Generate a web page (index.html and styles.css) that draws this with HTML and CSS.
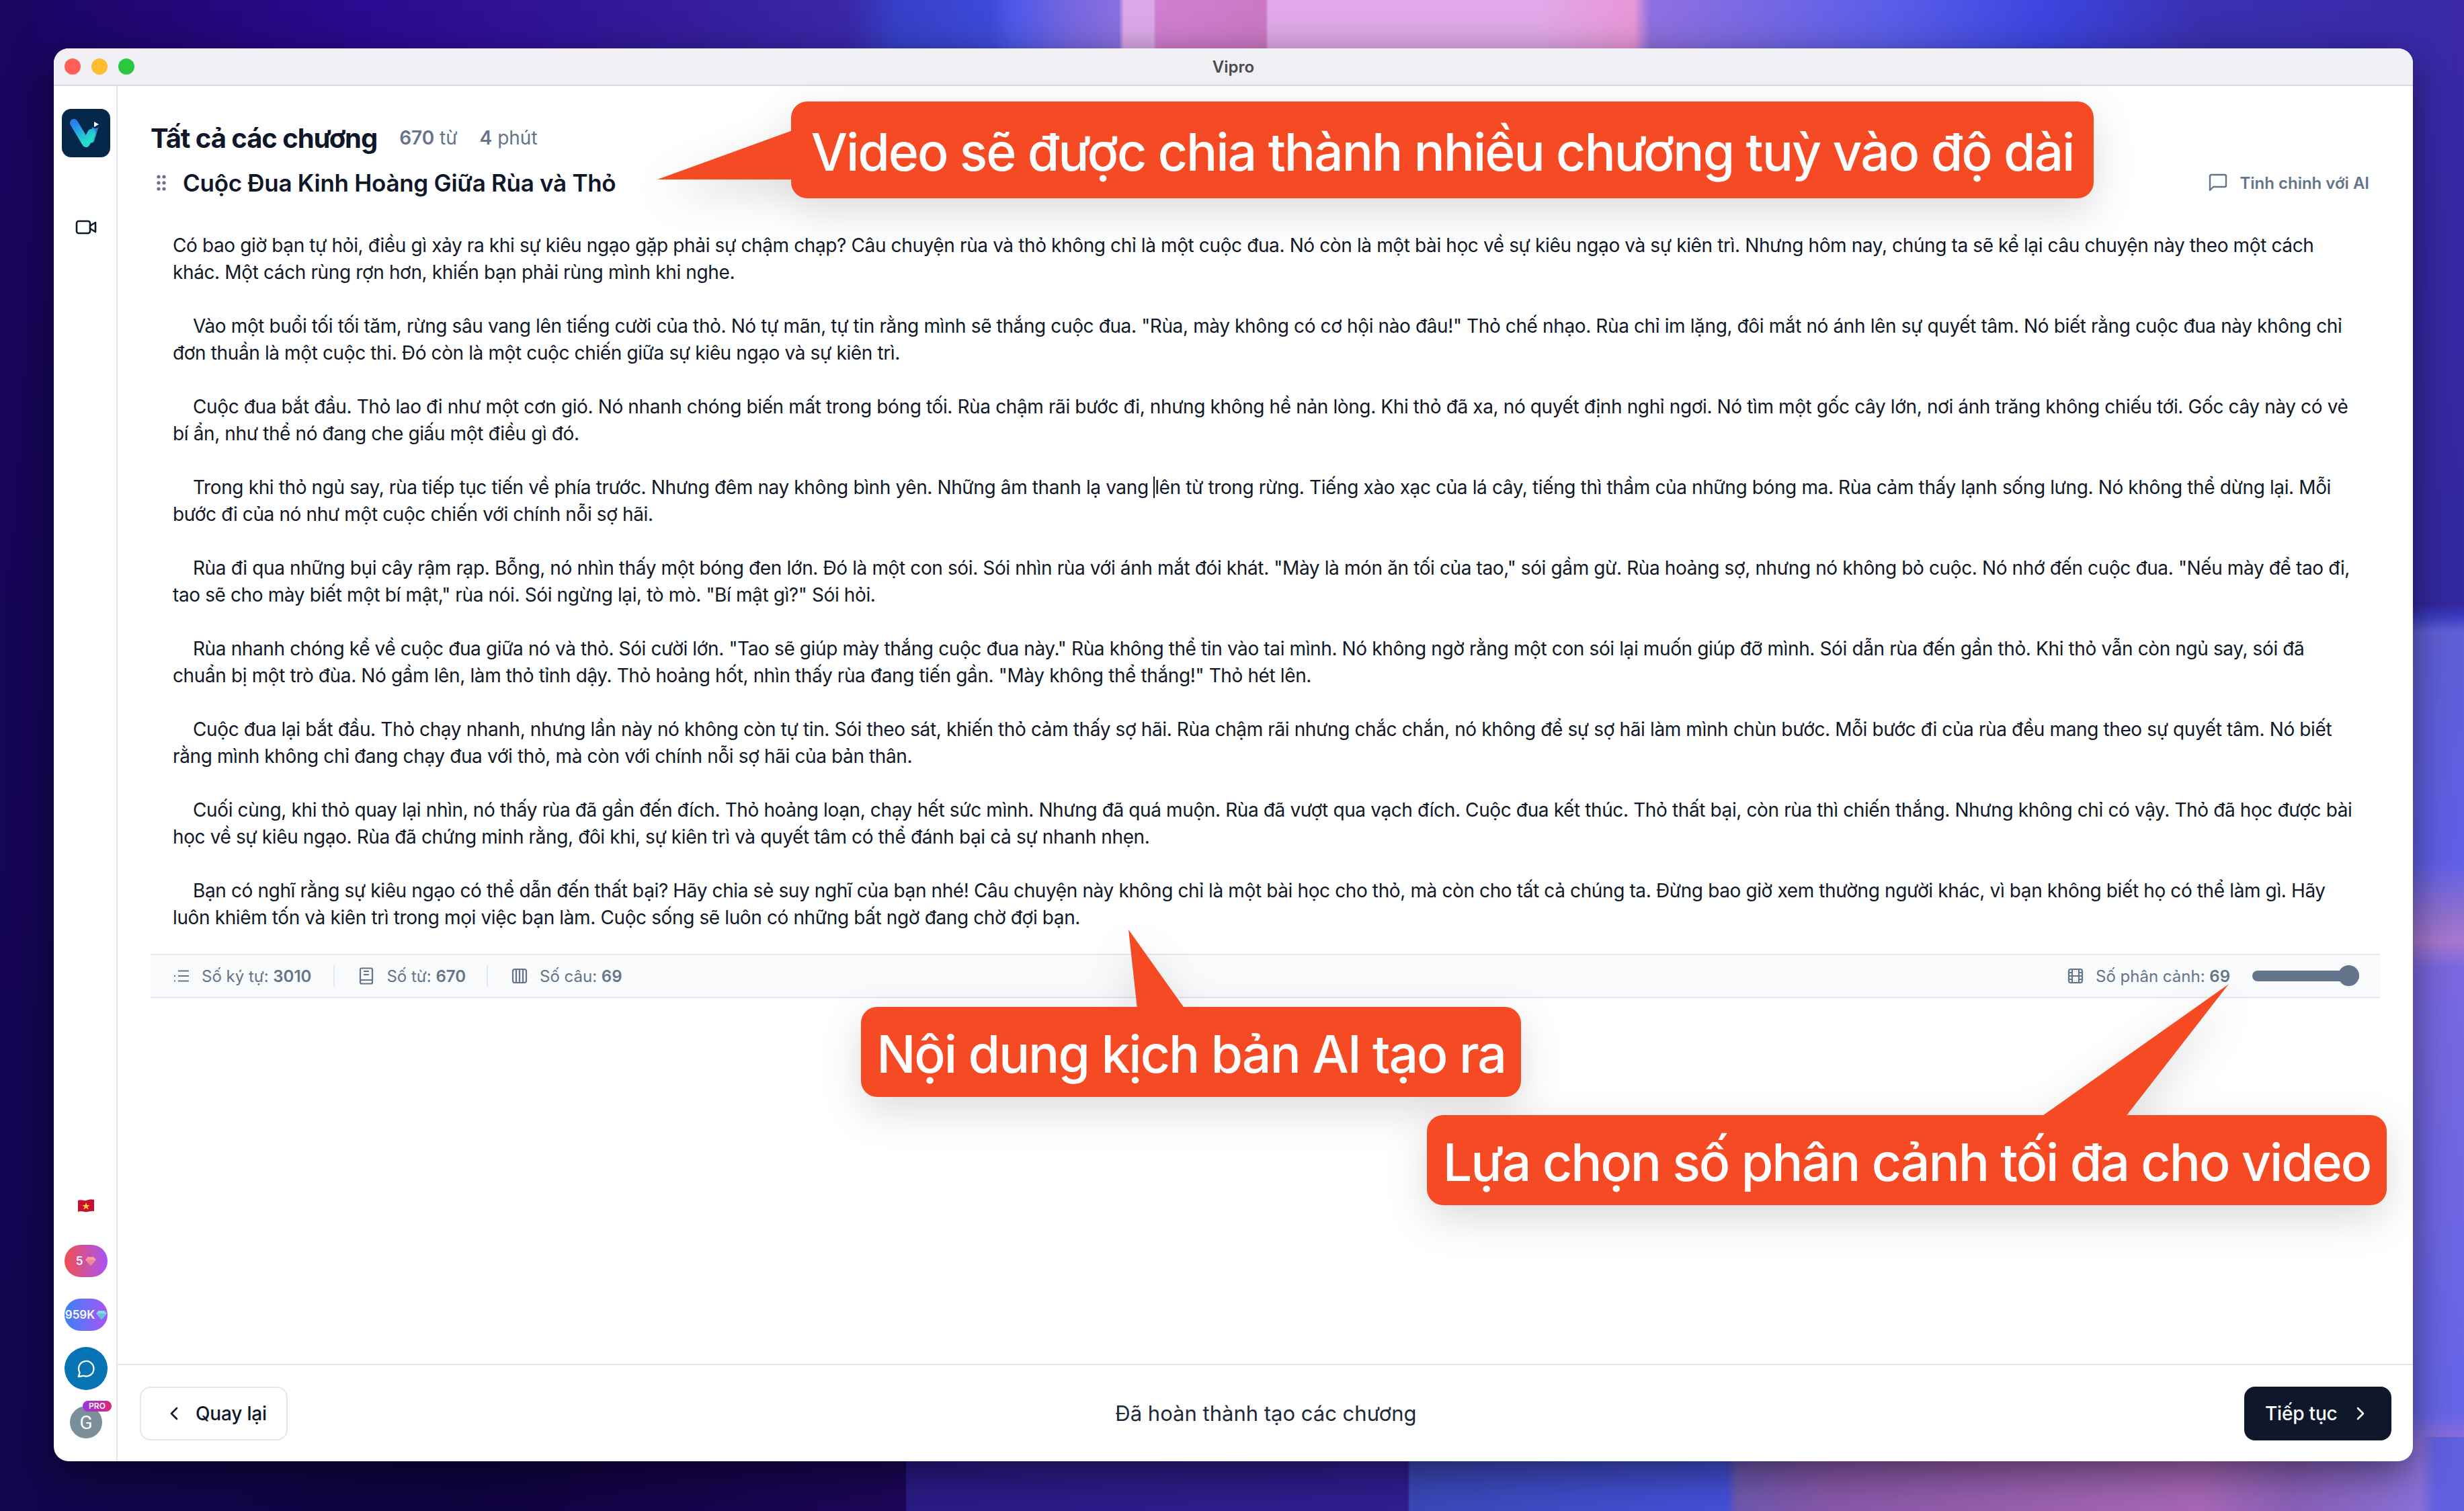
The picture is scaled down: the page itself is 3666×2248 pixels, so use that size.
FILE: index.html
```html
<!DOCTYPE html>
<html lang="vi">
<head>
    <meta charset="UTF-8">
    <title>Vipro</title>
    <link rel="stylesheet" href="styles.css">
</head>
<body>
    <div class="window">
        <header class="titlebar">
            <div class="lights"><span class="light red"></span><span class="light yellow"></span><span class="light green"></span></div>
            <div class="app-name">Vipro</div>
        </header>
        <div class="app">
            <!-- Sidebar -->
            <aside class="sidebar">
                <svg class="logo" viewBox="0 0 72 72">
                    <defs>
                        <linearGradient id="vLeft" x1="0" y1="0" x2="0.5" y2="1"><stop offset="0" stop-color="#2a7ff2"/><stop offset="1" stop-color="#25dccb"/></linearGradient>
                        <linearGradient id="vRight" x1="0" y1="1" x2="1" y2="0"><stop offset="0" stop-color="#25d5cf"/><stop offset="1" stop-color="#2a6fe0"/></linearGradient>
                    </defs>
                    <rect width="72" height="72" rx="14" fill="#04274a"/>
                    <path d="M44 46L51 24" stroke="url(#vRight)" stroke-width="9" stroke-linecap="round" fill="none"/>
                    <path d="M18 21L36 51L44 36" stroke="url(#vLeft)" stroke-width="12" stroke-linecap="round" stroke-linejoin="round" fill="none"/>
                    <circle cx="50" cy="23" r="6" fill="#04274a"/>
                    <path d="M48 19L55 23L48 27Z" fill="#fff"/>
                </svg>
                <svg class="nav-icon" viewBox="0 0 32 22" fill="none" stroke="#0f172a" stroke-width="2.6" stroke-linejoin="round"><rect x="2" y="2" width="20" height="18" rx="3"/><path d="M22 9L30 4V18L22 13"/></svg>
                <div class="side-bottom">
                    <svg class="flag" viewBox="0 0 26 20"><path d="M1 2C6 0 10 3 13 2S21 0 25 1V18C20 17 17 19 13 19S5 17 1 19Z" fill="#c8102e"/><path d="M13 5L14.4 9H18.5L15.2 11.4L16.5 15.4L13 13L9.5 15.4L10.8 11.4L7.5 9H11.6Z" fill="#ffd83d"/></svg>
                    <div class="pill pill-red">5<svg class="gem" viewBox="0 0 18 16"><path d="M4 1H14L18 6L9 16L0 6Z" fill="#f3a0a8"/><path d="M0 6H18L9 16Z" fill="#ec8a98"/></svg></div>
                    <div class="pill pill-blue">959K<svg class="gem" viewBox="0 0 18 16"><path d="M4 1H14L18 6L9 16L0 6Z" fill="#8fd8ec"/><path d="M0 6H18L9 16Z" fill="#6cc0e4"/></svg></div>
                    <div class="chat"><svg viewBox="0 0 32 32" fill="none" stroke="#fff" stroke-width="2.4" stroke-linejoin="round"><path d="M4 29L6 22.5A12 12 0 1 1 12 27.5C9.5 28 7 28.7 4 29Z"/></svg></div>
                    <div class="avatar">G<span class="pro">PRO</span></div>
                </div>
            </aside>

            <main class="main">
                <div class="content">
                    <div class="title-row">
                        <h1 class="title">Tất cả các chương</h1>
                        <span class="meta"><b>670</b> từ</span>
                        <span class="meta"><b>4</b> phút</span>
                    </div>
                    <div class="sub-row">
                        <div class="sub-left">
                            <svg class="grip" viewBox="0 0 16 26" fill="#64748b"><circle cx="4" cy="4" r="2.6"/><circle cx="12" cy="4" r="2.6"/><circle cx="4" cy="13" r="2.6"/><circle cx="12" cy="13" r="2.6"/><circle cx="4" cy="22" r="2.6"/><circle cx="12" cy="22" r="2.6"/></svg>
                            <h2 class="chapter">Cuộc Đua Kinh Hoàng Giữa Rùa và Thỏ</h2>
                        </div>
                        <div class="refine">
                            <svg viewBox="0 0 28 28" fill="none" stroke="#64748b" stroke-width="2.4" stroke-linejoin="round"><path d="M2 25V4A2 2 0 0 1 4 2H24A2 2 0 0 1 26 4V18A2 2 0 0 1 24 20H7Z"/></svg>
                            Tinh chỉnh với AI
                        </div>
                    </div>

                    <div class="script">
                        <p>Có bao giờ bạn tự hỏi, điều gì xảy ra khi sự kiêu ngạo gặp phải sự chậm chạp? Câu chuyện rùa và thỏ không chỉ là một cuộc đua. Nó còn là một bài học về sự kiêu ngạo và sự kiên trì. Nhưng hôm nay, chúng ta sẽ kể lại câu chuyện này theo một cách
khác. Một cách rùng rợn hơn, khiến bạn phải rùng mình khi nghe.</p>
                        <p>    Vào một buổi tối tối tăm, rừng sâu vang lên tiếng cười của thỏ. Nó tự mãn, tự tin rằng mình sẽ thắng cuộc đua. "Rùa, mày không có cơ hội nào đâu!" Thỏ chế nhạo. Rùa chỉ im lặng, đôi mắt nó ánh lên sự quyết tâm. Nó biết rằng cuộc đua này không chỉ
đơn thuần là một cuộc thi. Đó còn là một cuộc chiến giữa sự kiêu ngạo và sự kiên trì.</p>
                        <p>    Cuộc đua bắt đầu. Thỏ lao đi như một cơn gió. Nó nhanh chóng biến mất trong bóng tối. Rùa chậm rãi bước đi, nhưng không hề nản lòng. Khi thỏ đã xa, nó quyết định nghỉ ngơi. Nó tìm một gốc cây lớn, nơi ánh trăng không chiếu tới. Gốc cây này có vẻ
bí ẩn, như thể nó đang che giấu một điều gì đó.</p>
                        <p><span class="line">    Trong khi thỏ ngủ say, rùa tiếp tục tiến về phía trước. Nhưng đêm nay không bình yên. Những âm thanh lạ vang <span class="caret"></span>lên từ trong rừng. Tiếng xào xạc của lá cây, tiếng thì thầm của những bóng ma. Rùa cảm thấy lạnh sống lưng. Nó không thể dừng lại. Mỗi</span><span class="line">bước đi của nó như một cuộc chiến với chính nỗi sợ hãi.</span></p>
                        <p>    Rùa đi qua những bụi cây rậm rạp. Bỗng, nó nhìn thấy một bóng đen lớn. Đó là một con sói. Sói nhìn rùa với ánh mắt đói khát. "Mày là món ăn tối của tao," sói gầm gừ. Rùa hoảng sợ, nhưng nó không bỏ cuộc. Nó nhớ đến cuộc đua. "Nếu mày để tao đi,
tao sẽ cho mày biết một bí mật," rùa nói. Sói ngừng lại, tò mò. "Bí mật gì?" Sói hỏi.</p>
                        <p>    Rùa nhanh chóng kể về cuộc đua giữa nó và thỏ. Sói cười lớn. "Tao sẽ giúp mày thắng cuộc đua này." Rùa không thể tin vào tai mình. Nó không ngờ rằng một con sói lại muốn giúp đỡ mình. Sói dẫn rùa đến gần thỏ. Khi thỏ vẫn còn ngủ say, sói đã
chuẩn bị một trò đùa. Nó gầm lên, làm thỏ tỉnh dậy. Thỏ hoảng hốt, nhìn thấy rùa đang tiến gần. "Mày không thể thắng!" Thỏ hét lên.</p>
                        <p>    Cuộc đua lại bắt đầu. Thỏ chạy nhanh, nhưng lần này nó không còn tự tin. Sói theo sát, khiến thỏ cảm thấy sợ hãi. Rùa chậm rãi nhưng chắc chắn, nó không để sự sợ hãi làm mình chùn bước. Mỗi bước đi của rùa đều mang theo sự quyết tâm. Nó biết
rằng mình không chỉ đang chạy đua với thỏ, mà còn với chính nỗi sợ hãi của bản thân.</p>
                        <p>    Cuối cùng, khi thỏ quay lại nhìn, nó thấy rùa đã gần đến đích. Thỏ hoảng loạn, chạy hết sức mình. Nhưng đã quá muộn. Rùa đã vượt qua vạch đích. Cuộc đua kết thúc. Thỏ thất bại, còn rùa thì chiến thắng. Nhưng không chỉ có vậy. Thỏ đã học được bài
học về sự kiêu ngạo. Rùa đã chứng minh rằng, đôi khi, sự kiên trì và quyết tâm có thể đánh bại cả sự nhanh nhẹn.</p>
                        <p>    Bạn có nghĩ rằng sự kiêu ngạo có thể dẫn đến thất bại? Hãy chia sẻ suy nghĩ của bạn nhé! Câu chuyện này không chỉ là một bài học cho thỏ, mà còn cho tất cả chúng ta. Đừng bao giờ xem thường người khác, vì bạn không biết họ có thể làm gì. Hãy
luôn khiêm tốn và kiên trì trong mọi việc bạn làm. Cuộc sống sẽ luôn có những bất ngờ đang chờ đợi bạn.</p>
                    </div>

                    <div class="stats">
                        <div class="stat">
                            <svg viewBox="0 0 24 24" fill="none" stroke="#64748b" stroke-width="2.2"><path d="M7 4.5H23M7 12H23M7 19.5H23M1 12H3M1 19.5H3"/></svg>
                            <span>Số ký tự: <b>3010</b></span>
                        </div>
                        <div class="stat stat-words">
                            <svg viewBox="0 0 22 26" fill="none" stroke="#64748b" stroke-width="2.2" stroke-linejoin="round"><rect x="2" y="1.5" width="18" height="23" rx="2"/><path d="M2 19H20M7 6H15M7 11H15"/></svg>
                            <span>Số từ: <b>670</b></span>
                        </div>
                        <div class="stat stat-last">
                            <svg viewBox="0 0 24 24" fill="none" stroke="#64748b" stroke-width="2.2"><rect x="2" y="2" width="20" height="20" rx="3"/><path d="M7 2V22M12 2V22M17 2V22"/></svg>
                            <span>Số câu: <b>69</b></span>
                        </div>
                        <div class="stat-right">
                            <svg viewBox="0 0 24 24" fill="none" stroke="#64748b" stroke-width="2.2"><rect x="2" y="2" width="20" height="20" rx="3"/><path d="M7 2V22M17 2V22M2 12H22M2 7H7M2 17H7M17 7H22M17 17H22"/></svg>
                            <span class="scene-label">Số phân cảnh: <b>69</b></span>
                            <div class="slider"><span class="thumb"></span></div>
                        </div>
                    </div>
                </div>

                <footer class="footer">
                    <button class="btn btn-back">
                        <svg viewBox="0 0 12 20" fill="none" stroke="#0f172a" stroke-width="2.6" stroke-linecap="round" stroke-linejoin="round"><path d="M10 2L2 10L10 18"/></svg>
                        Quay lại
                    </button>
                    <div class="status">Đã hoàn thành tạo các chương</div>
                    <button class="btn btn-next">
                        Tiếp tục
                        <svg viewBox="0 0 12 20" fill="none" stroke="#fff" stroke-width="2.6" stroke-linecap="round" stroke-linejoin="round"><path d="M2 2L10 10L2 18"/></svg>
                    </button>
                </footer>
            </main>
        </div>
    </div>

    <!-- Annotations on top of the screenshot -->
    <div class="callout callout-chapters">
        <svg class="tail" viewBox="0 0 210 90"><polygon points="0,74 204,0 204,74"/></svg>
        Video sẽ được chia thành nhiều chương tuỳ vào độ dài
    </div>
    <div class="callout callout-script">
        <svg class="tail" viewBox="0 0 90 120"><polygon points="0,0 13,118 84,118"/></svg>
        Nội dung kịch bản AI tạo ra
    </div>
    <div class="callout callout-scenes">
        <svg class="tail" viewBox="0 0 290 200"><polygon points="284,0 4,198 130,198"/></svg>
        Lựa chọn số phân cảnh tối đa cho video
    </div>
</body>
</html>
```

FILE: styles.css
```css
* {
    box-sizing: border-box;
}
html, body {
    margin: 0;
    height: 100%;
}
body {
    position: relative;
    width: 3666px;
    height: 2248px;
    overflow: hidden;
    padding: 72px 76px 74px 80px;
    font-family: Inter, "Noto Sans", sans-serif;
    color: #0f172a;
    /* wallpaper, only the edges show around the window */
    background:
        linear-gradient(90deg, #1a0560 0, #2a0a90 538px, #33189a 935px, #3a28a8 1263px, #3540c8 1333px, #3d4ad8 1473px, #4f58e8 1508px, #7566e0 1590px, #8a70e0 1665px, #dca8e8 1672px, #dca8e8 1716px, #cf7fd0 1720px, #cb78c4 1883px, #e0a8e8 1887px, #e0a8e8 2291px, #e896d8 2431px, #9070e0 2455px, #5a5ee8 2805px, #3c45e0 3040px, #3a30b0 3273px, #3a28a8 3666px) top / 100% 110px no-repeat,
        linear-gradient(90deg, #14064f 0, #0f0340 700px, #1c0658 1347px, #2a1a85 1349px, #2f1e90 2095px, #3a48b8 2097px, #4450d8 2570px, #6f58b0 2584px, #8a58a8 2735px, #a868b8 3273px, #8a60b8 3413px, #8a70d8 3600px, #6060e0 3624px, #6060e0 3666px) bottom / 100% 110px no-repeat,
        linear-gradient(180deg, #3a28a8 0, #3328a0 900px, #3b3cc0 917px, #6060d8 940px, #5f5fe8 1280px, #9070d0 1362px, #a878d0 1400px, #7a68e0 1440px, #6565e8 2100px, #9070d8 2150px, #a070d0 2248px) right / 120px 100% no-repeat,
        linear-gradient(180deg, #1a0560 0, #17065a 600px, #13054f 2248px);
}
.window {
    height: 100%;
    display: flex;
    flex-direction: column;
    background: #fff;
    border-radius: 22px;
    overflow: hidden;
    box-shadow: 0 16px 60px rgba(0,0,0,0.5);
}
.titlebar {
    position: relative;
    flex: 0 0 56px;
    display: flex;
    align-items: center;
    justify-content: center;
    background: #f0f0f5;
    border-bottom: 2px solid #d9d9de;
}
.lights {
    position: absolute;
    left: 16px;
    display: flex;
    gap: 16px;
}
.light {
    width: 24px;
    height: 24px;
    border-radius: 50%;
}
.red { background: #ff5f57; }
.yellow { background: #febc2e; }
.green { background: #28c840; }
.app-name {
    font-size: 24px;
    font-weight: 600;
    color: #4a4a4f;
}
.app {
    flex: 1;
    display: flex;
    min-height: 0;
}

/* sidebar */
.sidebar {
    flex: 0 0 95px;
    display: flex;
    flex-direction: column;
    align-items: center;
    padding-top: 34px;
    padding-left: 3px;
    border-right: 2px solid #e5e7eb;
}
.logo {
    width: 72px;
    height: 72px;
    flex: none;
}
.nav-icon {
    width: 32px;
    height: 22px;
    margin-top: 93px;
    flex: none;
}
.side-bottom {
    margin-top: auto;
    padding-bottom: 34px;
    display: flex;
    flex-direction: column;
    align-items: center;
}
.flag {
    width: 26px;
    height: 20px;
    margin-bottom: 48px;
}
.pill {
    width: 64px;
    height: 48px;
    border-radius: 24px;
    display: flex;
    align-items: center;
    justify-content: center;
    gap: 4px;
    color: #fff;
    font-size: 17px;
    font-weight: 600;
    white-space: nowrap;
    margin-bottom: 32px;
}
.pill-red { background: linear-gradient(90deg, #f04f50, #a855f7); }
.pill-blue {
    background: linear-gradient(90deg, #3b82f6, #a855f7);
    margin-bottom: 24px;
    gap: 2px;
}
.gem {
    width: 16px;
    height: 14px;
    flex: none;
}
.chat {
    width: 64px;
    height: 64px;
    border-radius: 50%;
    background: #0874b4;
    display: flex;
    align-items: center;
    justify-content: center;
    margin-bottom: 24px;
}
.chat svg {
    width: 30px;
    height: 30px;
}
.avatar {
    position: relative;
    width: 48px;
    height: 48px;
    border-radius: 50%;
    background: #7b8f9a;
    color: #fff;
    font-family: Roboto, sans-serif;
    font-size: 28px;
    display: flex;
    align-items: center;
    justify-content: center;
}
.pro {
    position: absolute;
    left: 19px;
    top: -8px;
    width: 43px;
    height: 16px;
    border-radius: 8px;
    background: linear-gradient(90deg, #9a34e0, #db2777);
    font-family: Inter, sans-serif;
    font-size: 12px;
    font-weight: 600;
    line-height: 16px;
    text-align: center;
}

/* main */
.main {
    flex: 1;
    display: flex;
    flex-direction: column;
    min-width: 0;
}
.content {
    flex: 1;
    padding: 53px 49px 0;
}
.title-row {
    display: flex;
    align-items: center;
    height: 48px;
    gap: 33px;
}
.title {
    margin: 0;
    font-size: 40px;
    font-weight: 700;
    letter-spacing: -1.06px;
}
.meta {
    font-size: 28px;
    color: #64748b;
}
.meta b {
    font-weight: 600;
}
.sub-row {
    display: flex;
    align-items: center;
    justify-content: space-between;
    height: 48px;
    margin-top: 19px;
}
.sub-left {
    display: flex;
    align-items: center;
    gap: 24px;
    padding-left: 8px;
}
.grip {
    width: 16px;
    height: 26px;
}
.chapter {
    margin: 0;
    font-size: 35px;
    font-weight: 600;
    letter-spacing: -0.28px;
}
.refine {
    display: flex;
    align-items: center;
    gap: 18px;
    padding-right: 16px;
    font-size: 24px;
    font-weight: 600;
    color: #64748b;
}
.refine svg {
    width: 28px;
    height: 28px;
}
.script {
    margin-top: 49px;
    padding-left: 33px;
    font-size: 28px;
    line-height: 40px;
    letter-spacing: -0.38px;
    color: #111827;
}
.script p {
    margin: 0 0 40px;
    white-space: pre;
}
.script p:last-child {
    margin-bottom: 0;
}
.line {
    display: block;
}
.caret {
    display: inline-block;
    width: 0;
    height: 32px;
    vertical-align: -6px;
    border-left: 2px solid #111827;
}
.stats {
    display: flex;
    align-items: center;
    height: 66px;
    margin-top: 34px;
    padding: 0 31px 0 34px;
    background: #f8fafc;
    border-top: 2px solid #e2e8f0;
    border-bottom: 2px solid #e2e8f0;
    font-size: 24px;
    color: #64748b;
}
.stats b {
    font-weight: 600;
}
.stat {
    display: flex;
    align-items: center;
    gap: 18px;
    height: 32px;
    padding-right: 33px;
    margin-right: 36px;
    border-right: 2px solid #e2e8f0;
}
.stat-words {
    gap: 19px;
    padding-right: 31px;
    margin-right: 35px;
}
.stat-last {
    border-right: none;
}
.stat svg, .stat-right svg {
    width: 24px;
    height: 24px;
    flex: none;
}
.stat-words svg {
    width: 22px;
    height: 26px;
}
.stat-right {
    margin-left: auto;
    display: flex;
    align-items: center;
    gap: 18px;
}
.slider {
    position: relative;
    width: 159px;
    height: 16px;
    margin-left: 15px;
    border-radius: 8px;
    background: #64748b;
}
.thumb {
    position: absolute;
    right: 0;
    top: -8px;
    width: 31px;
    height: 31px;
    border-radius: 50%;
    background: #64748b;
}
.footer {
    flex: 0 0 145px;
    display: flex;
    align-items: center;
    justify-content: space-between;
    padding: 0 32px 0 33px;
    border-top: 2px solid #e5e7eb;
}
.btn {
    display: flex;
    align-items: center;
    height: 80px;
    border-radius: 16px;
    font-family: inherit;
    font-size: 28px;
    font-weight: 500;
    letter-spacing: -0.2px;
}
.btn svg {
    width: 12px;
    height: 20px;
}
.btn-back {
    width: 220px;
    gap: 26px;
    padding: 0 0 0 43px;
    background: #fff;
    border: 2px solid #e2e8f0;
    color: #0f172a;
}
.btn-next {
    width: 219px;
    gap: 28px;
    padding: 0 0 0 31px;
    background: #0f172a;
    border: none;
    color: #fff;
}
.status {
    font-size: 31px;
    color: #1e293b;
}

/* orange annotations */
.callout {
    position: absolute;
    display: flex;
    align-items: center;
    justify-content: center;
    padding-top: 6px;
    background: #f54a24;
    border-radius: 24px;
    color: #fff;
    font-size: 77px;
    font-weight: 500;
    letter-spacing: -2.1px;
    white-space: nowrap;
    filter: drop-shadow(0 20px 30px rgba(0,0,0,0.14));
}
.tail {
    position: absolute;
    fill: #f54a24;
}
.callout-chapters {
    left: 1177px;
    top: 151px;
    width: 1938px;
    height: 144px;
}
.callout-chapters .tail {
    left: -199px;
    top: 42px;
    width: 210px;
    height: 90px;
}
.callout-script {
    left: 1281px;
    top: 1498px;
    width: 982px;
    height: 134px;
}
.callout-script .tail {
    left: 398px;
    top: -115px;
    width: 90px;
    height: 120px;
}
.callout-scenes {
    left: 2123px;
    top: 1659px;
    width: 1428px;
    height: 134px;
}
.callout-scenes .tail {
    left: 909px;
    top: -195px;
    width: 290px;
    height: 200px;
}
```
